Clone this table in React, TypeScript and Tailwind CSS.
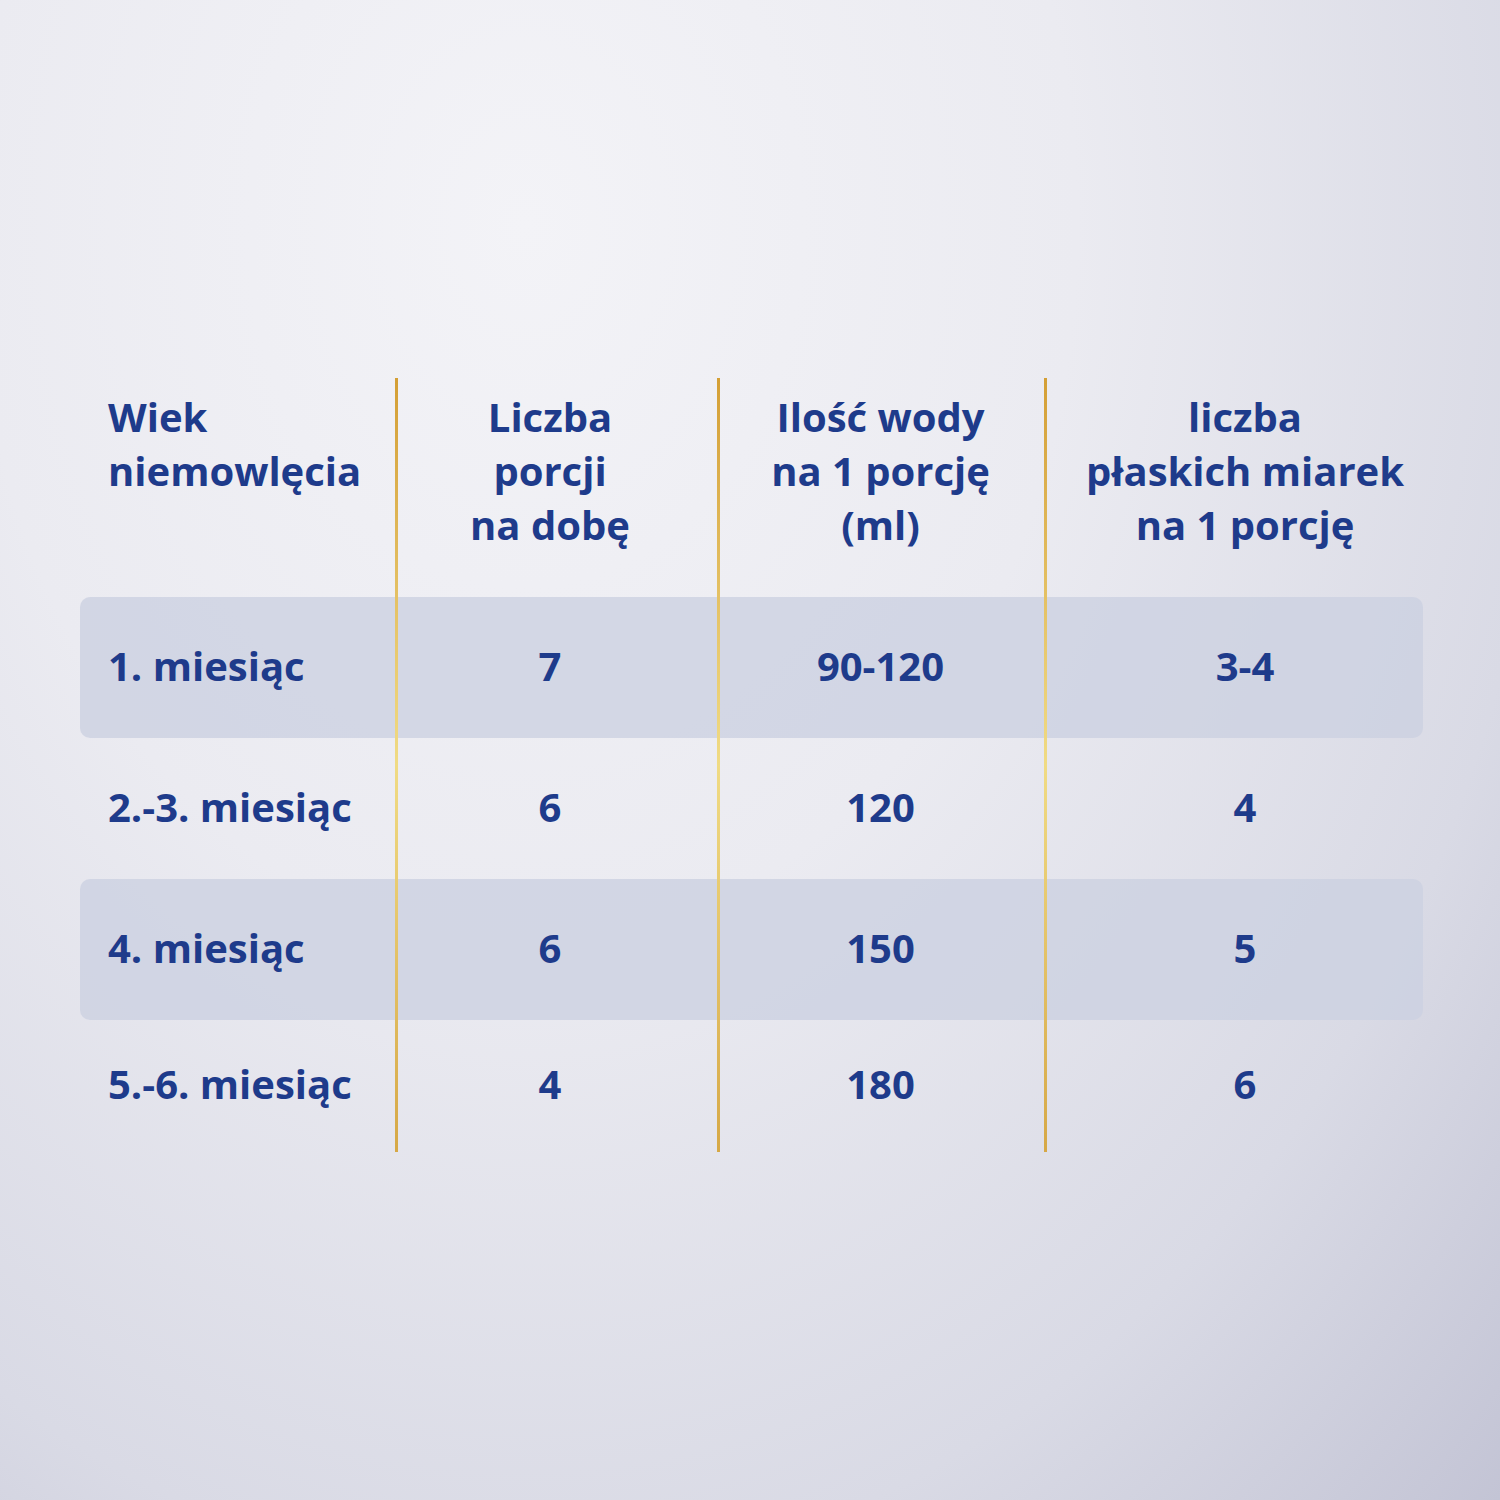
import React from 'react';

// wiersze tabeli dawkowania
const rows = [
  { age: '1. miesiąc', portions: '7', water: '90-120', scoops: '3-4', band: true },
  { age: '2.-3. miesiąc', portions: '6', water: '120', scoops: '4', band: false },
  { age: '4. miesiąc', portions: '6', water: '150', scoops: '5', band: true },
  { age: '5.-6. miesiąc', portions: '4', water: '180', scoops: '6', band: false },
];

const cols = 'grid grid-cols-[316px_322px_327px_1fr]';

const GoldLine: React.FC<{ left: number }> = ({ left }) => (
  <div
    className="absolute top-0 bottom-0 w-[3px] bg-gradient-to-b from-[#d49f35] via-[#f0db84] to-[#d6a846]"
    style={{ left }}
  />
);

const App: React.FC = () => {
  return (
    <div
      className="w-[1500px] h-[1500px] bg-[radial-gradient(ellipse_at_35%_15%,#f3f3f7_0%,#ebebf1_40%,#d9dae5_75%,#c3c4d5_100%)] text-[#1e3b8b] pt-[378px] pl-[80px]"
      style={{ fontFamily: '"Open Sans", "Noto Sans", sans-serif' }}
    >
      <div className="relative w-[1343px]">
        {/* nagłówek */}
        <div className={`${cols} h-[219px] pt-[12px] text-[40px] font-bold leading-[54px]`}>
          <div className="pl-[28px] text-left">
            Wiek<br />niemowlęcia
          </div>
          <div className="text-center pr-[14px]">
            Liczba<br />porcji<br />na dobę
          </div>
          <div className="text-center pr-[2px]">
            Ilość wody<br />na 1 porcję<br />(ml)
          </div>
          <div className="text-center pl-[22px]">
            liczba<br />płaskich miarek<br />na 1 porcję
          </div>
        </div>

        {rows.map((r, i) => (
          <div
            key={r.age}
            className={`${cols} items-center text-[40px] font-bold rounded-[10px] pb-[4px] ${
              i === 3 ? 'h-[132px]' : 'h-[141px]'
            } ${r.band ? 'bg-[#ccd1e1]/80' : ''}`}
          >
            <div className="pl-[28px]">{r.age}</div>
            <div className="text-center pr-[14px]">{r.portions}</div>
            <div className="text-center pr-[2px]">{r.water}</div>
            <div className="text-center pl-[22px]">{r.scoops}</div>
          </div>
        ))}

        <GoldLine left={315} />
        <GoldLine left={637} />
        <GoldLine left={964} />
      </div>
    </div>
  );
};

export default App;
